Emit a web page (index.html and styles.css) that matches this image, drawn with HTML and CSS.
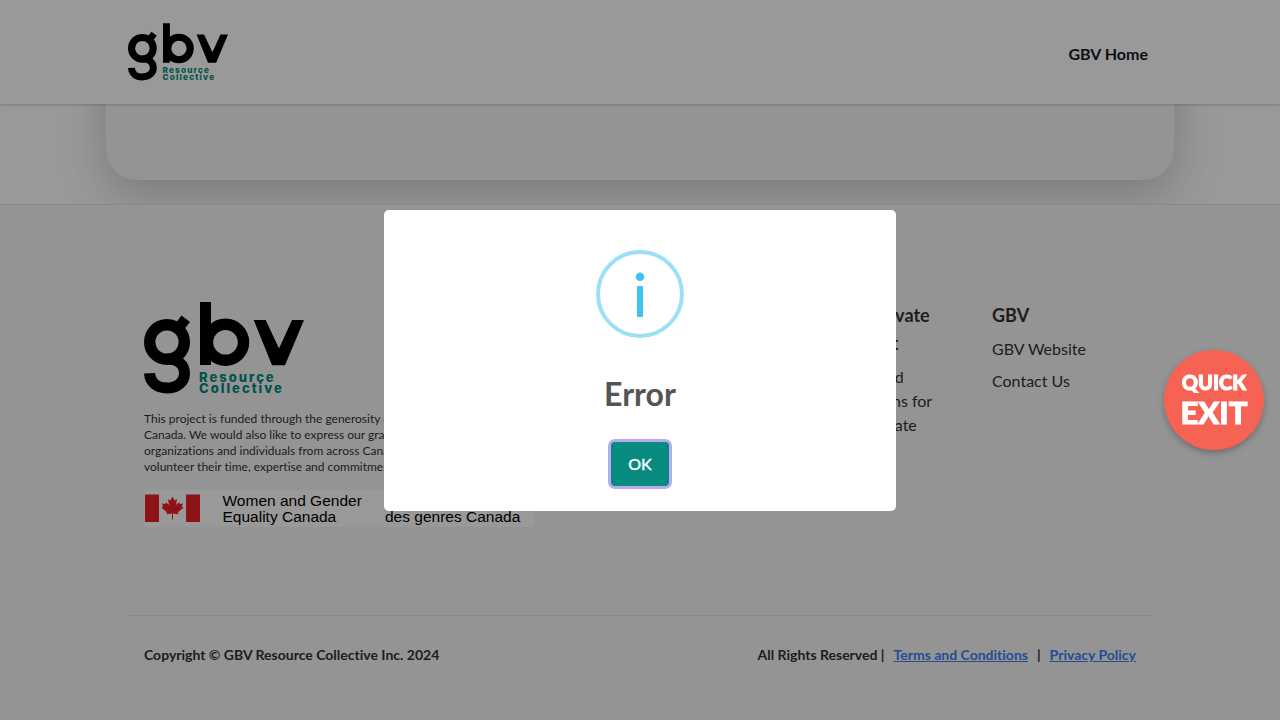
FILE: index.html
```html
<!DOCTYPE html>
<html lang="en">
<head>
  <meta charset="utf-8">
  <meta name="viewport" content="width=device-width, initial-scale=1">
  <title>GBV Resource Collective</title>
  <link rel="stylesheet" href="styles.css">
</head>
<body>
  <header class="header">
    <a href="#" aria-label="GBV Resource Collective">
      <svg class="header-logo" viewBox="0 0 160 92">
        <g id="logo">
          <g fill="none" stroke="#000">
            <circle cx="23" cy="40" r="17.3" stroke-width="11.4"/>
            <path d="M5.5 71.3C6 80.500 13 86 23 86S40.500 80 40.500 71.500C40.500 62 33.500 57 23 57" stroke-width="11"/>
            <circle cx="81.500" cy="40.300" r="18" stroke-width="11.400"/>
          </g>
          <path d="M37.500 13.500L46 20L40 27.500L31 22ZM56 0H67V63H56ZM109.700 18H121.700L135 46.500L148 18H160L141 63.300H128Z"/>
          <text class="logo-text" x="55" y="80">Resource</text>
          <text class="logo-text" x="55" y="91">Collective</text>
        </g>
      </svg>
    </a>
    <nav><a class="nav-link" href="#">GBV Home</a></nav>
  </header>

  <main class="main"><section class="card"></section></main>

  <footer class="footer">
    <div class="footer-top">
      <div class="about">
        <svg class="footer-logo" viewBox="0 0 160 92" role="img" aria-label="GBV Resource Collective"><use href="#logo"/></svg>
        <p class="about-text">This project is funded through the generosity of the Government of Canada. We would also like to express our gratitude to the many organizations and individuals from across Canada who continue to volunteer their time, expertise and commitment.</p>
        <svg class="funder" viewBox="0 0 782 74">
          <path fill="#eb2027" d="M2 9H30V64H2ZM84 9H112V64H84Z"/>
          <path transform="translate(2 8) scale(2)" fill="#eb2027" d="M27.500 2.500L29.600 6.500L32 5.300L31 11L34 8.200L34.800 10L38 9.500L37 12.700L38.500 13.700L33 18.200L33.600 20.300L28 19.500V25.500H27V19.500L21.400 20.300L22 18.200L16.500 13.700L18 12.700L17 9.500L20.200 10L21 8.200L24 11L23 5.300L25.400 6.500Z"/>
          <text x="157" y="31">Women and Gender</text>
          <text x="157" y="64">Equality Canada</text>
          <text x="482" y="31">Femmes et Égalité</text>
          <text x="482" y="64">des genres Canada</text>
        </svg>
      </div>
      <div class="links">
        <h2>Your Private Account</h2>
        <a href="#">Terms and Conditions for your Private</a>
      </div>
      <div class="links">
        <h2>GBV</h2>
        <a href="#">GBV Website</a>
        <a href="#">Contact Us</a>
      </div>
    </div>
    <div class="footer-bottom">
      <span>Copyright © GBV Resource Collective Inc. 2024</span>
      <div class="legal">
        <span>All Rights Reserved |</span>
        <a href="#">Terms and Conditions</a>
        <span>|</span>
        <a href="#">Privacy Policy</a>
      </div>
    </div>
  </footer>

  <div class="backdrop">
    <div class="modal" role="dialog" aria-modal="true" aria-labelledby="modal-title">
      <svg class="info" viewBox="0 0 88 88" aria-hidden="true">
        <circle cx="44" cy="44" r="42" fill="none" stroke="#9de0f6" stroke-width="4"/>
        <circle cx="44" cy="26.700" r="4.300" fill="#3fc3ee"/>
        <path d="M41 36H47V67H41Z" fill="#3fc3ee"/>
      </svg>
      <h1 class="modal-title" id="modal-title">Error</h1>
      <button class="ok" type="button">OK</button>
    </div>
  </div>
  <button class="quick-exit" type="button"><span class="quick">QUICK</span><span class="exit">EXIT</span></button>
</body>
</html>
```
FILE: styles.css
```css
* { box-sizing: border-box; }
body {
  margin: 0;
  height: 100vh;
  overflow: hidden;
  display: flex;
  flex-direction: column;
  background: #fff;
  color: #333;
  font: 16px/24px Lato, sans-serif;
  font-variant-ligatures: none;
}
h1, h2, p { margin: 0; }
a { color: inherit; text-decoration: none; }
svg { display: block; }
.logo-text { font: 800 13px Inter, sans-serif; letter-spacing: 2px; fill: #008b7d; }

.header {
  position: relative;
  flex: none;
  display: flex;
  align-items: center;
  justify-content: space-between;
  padding: 23px 132px 23px 128px;
  background: #fff;
  box-shadow: 0 1px 3px rgba(0, 0, 0, 0.2);
}
.header-logo { width: 100px; height: 58px; }
.nav-link { display: block; padding-top: 4px; font-weight: 700; color: #111827; }

.main { flex: none; overflow: hidden; padding: 0 106px 24px; }
.card {
  height: 200px;
  margin-top: -124px;
  border-radius: 32px;
  background: #f7f7f7;
  box-shadow: 0 16px 48px rgba(0, 0, 0, 0.2);
}

.footer {
  flex: 1;
  padding: 96px 128px 0;
  border-top: 1px solid #e5e7eb;
  background: #f7f7f7;
}
.footer-top {
  display: grid;
  grid-template-columns: 1fr 112px 144px;
  column-gap: 48px;
  padding: 0 16px 88px;
}
.about { width: 391px; padding-top: 1px; }
.footer-logo { width: 160px; height: 92px; }
.about-text { margin: 17px 0 15px; font-size: 12px; line-height: 16px; }
.funder {
  width: 391px;
  height: 37px;
  background: #fff;
  font: 31px "Liberation Sans", sans-serif;
}
.links { display: flex; flex-direction: column; gap: 8px; }
.links h2 { font-size: 18px; line-height: 28px; }
.footer-bottom {
  display: flex;
  justify-content: space-between;
  padding: 27px 16px;
  border-top: 1px solid #e5e7eb;
  font-size: 14px;
  font-weight: 700;
}
.legal { display: flex; gap: 9px; }
.legal a { color: #3b82f6; text-decoration: underline; }

.backdrop {
  position: fixed;
  inset: 0;
  display: flex;
  align-items: center;
  justify-content: center;
  background: rgba(0, 0, 0, 0.4);
}
.modal {
  display: flex;
  flex-direction: column;
  align-items: center;
  width: 512px;
  max-width: 100%;
  padding: 40px 20px 25px;
  border-radius: 5px;
  background: #fff;
}
.info { width: 88px; height: 88px; }
.modal-title { margin: 38px 0 30px; font-size: 32px; line-height: 36px; color: #545454; }
.ok {
  padding: 10px 17px;
  border: 0;
  border-radius: 4px;
  background: #078a80;
  box-shadow: 0 0 0 3px #b7acee;
  color: #fff;
  font: 500 16px/24px Lato, sans-serif;
  -webkit-text-stroke: 0.3px #fff;
}
.quick-exit {
  position: fixed;
  right: 16px;
  top: 350px;
  width: 100px;
  height: 100px;
  display: flex;
  flex-direction: column;
  align-items: center;
  justify-content: center;
  padding: 0 0 4px;
  border: 0;
  border-radius: 50%;
  background: #f66355;
  box-shadow: 0 3px 6px rgba(0, 0, 0, 0.25);
  color: #fff;
  font-family: Lato, sans-serif;
  font-weight: 900;
  -webkit-text-stroke: 1px #fff;
}
.quick { font-size: 20px; line-height: 28px; }
.exit { font-size: 31px; line-height: 32px; }
```
